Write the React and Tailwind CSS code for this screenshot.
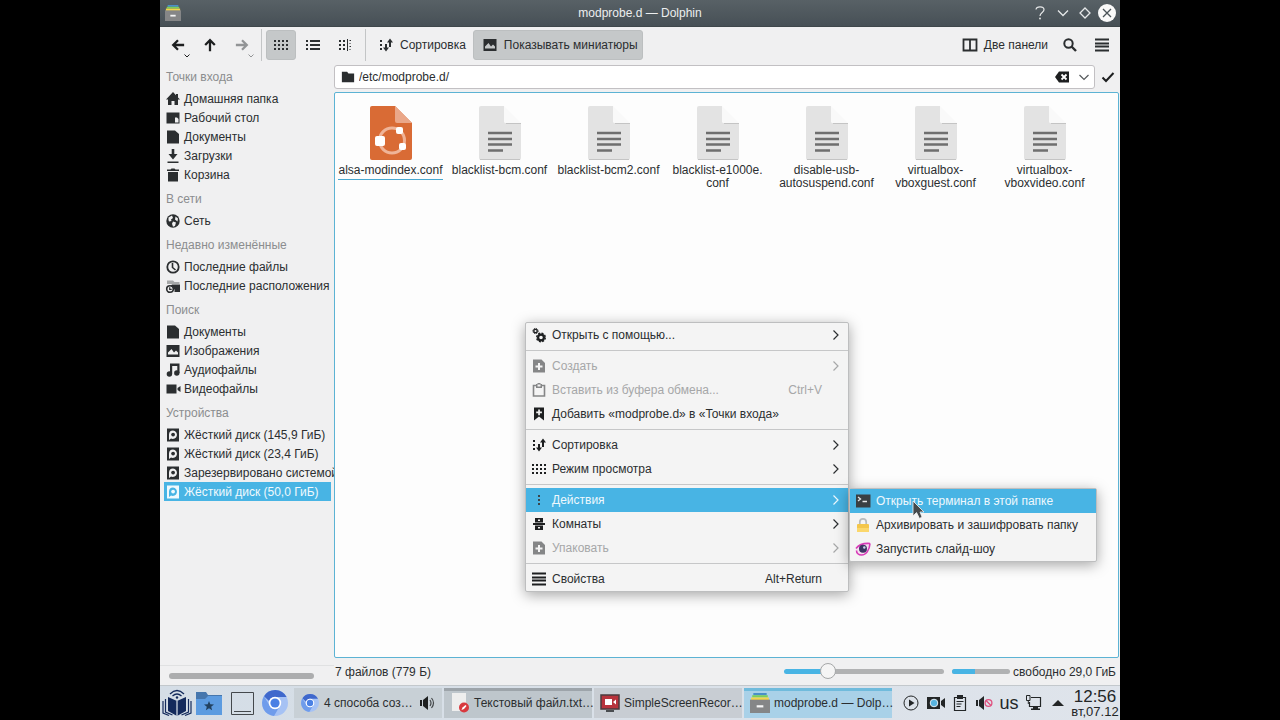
import React from "react";

const ICONS = {
  back: <path d="M15 8H3M8 2.5 2.5 8 8 13.5" fill="none" stroke="currentColor" strokeWidth="2.6" />,
  up: <path d="M8 15V3M2.5 8 8 2.5 13.5 8" fill="none" stroke="currentColor" strokeWidth="2.6" />,
  forward: <path d="M1 8h12M8 2.5 13.5 8 8 13.5" fill="none" stroke="currentColor" strokeWidth="2.6" />,
  grid: <path d="M1 4h14M1 8h14M1 12h14" fill="none" stroke="currentColor" strokeWidth="2" strokeDasharray="2 2" />,
  list: (
    <>
      <path d="M1 4h2M1 8h2M1 12h2" stroke="currentColor" strokeWidth="2" />
      <path d="M5 4h10M5 8h10M5 12h10" stroke="currentColor" strokeWidth="2" />
    </>
  ),
  columns: (
    <>
      <path d="M2 4h7M2 8h7M2 12h7" stroke="currentColor" strokeWidth="2" strokeDasharray="2 2" />
      <path d="M10.5 2v12" stroke="currentColor" strokeWidth="1" />
      <path d="M12.500 3.500h1.500M12.500 6.500h1M12.500 9.500h1.500M12.500 12.500h1" stroke="currentColor" strokeWidth="1" />
    </>
  ),
  sort: (
    <>
      <path d="M3 3v11" stroke="currentColor" strokeWidth="2" strokeDasharray="2 2" />
      <path d="M8 7v6M12 4v6" stroke="currentColor" strokeWidth="2" />
      <path d="M5 10.5h6l-3 4zM9 5.500h6l-3-4z" fill="currentColor" />
    </>
  ),
  image: <path fillRule="evenodd" d="M1.500 2h13v12h-13zM3 11.500h10V9.500l-2-2-2 2L6.500 6 3 9.500z" fill="currentColor" />,
  split: <path d="M1.5 2.5h13v11h-13zM8 2.5v11" fill="none" stroke="currentColor" strokeWidth="1.8" />,
  search: (
    <>
      <circle cx="6.5" cy="6.5" r="4.2" fill="none" stroke="currentColor" strokeWidth="2" />
      <path d="m9.5 9.5 4.5 4.5" stroke="currentColor" strokeWidth="2.4" />
    </>
  ),
  menu: <path d="M1 2.500h14M1 6.500h14M1 9.500h14M1 13.500h14" stroke="currentColor" strokeWidth="1.8" />,
  folder: <path d="M1 2h6l1.500 2H15v10H1z" fill="currentColor" />,
  home: <path d="M8 1 1 8.500h2V14h3.500v-4h3v4H13V8.500h2L13 6.500V3h-2v1.200z" fill="currentColor" />,
  desktop: (
    <>
      <path d="M1.500 2.500h13v11h-13z" fill="currentColor" />
      <path d="M10 7.500h2L13.500 9v3.500H10z" fill="#f0f0f1" />
    </>
  ),
  doc: <path d="M2 1.500h8L14 5v9.500H2z" fill="currentColor" />,
  download: <path d="M6.700 1h2.600v5h3.200L8 11.500 3.500 6h3.200zM2.500 13.500h11V15h-11z" fill="currentColor" />,
  trash: <path d="M2 2.500h3.500l1-1h3l1 1H14V4H2zM3 5h10v9.500H3z" fill="currentColor" />,
  globe: (
    <>
      <circle cx="8" cy="8" r="6.700" fill="currentColor" />
      <path d="M3.500 4.500 7 2.500 8 5 6 6.500 6.500 8 4 8.500 3.500 7zM8 8.500l3 1-1 3.500-2 .8-1-3zM10.500 3.500l2.500 2-.5 3-2.500-2z" fill="#f0f0f1" />
    </>
  ),
  clock: (
    <>
      <circle cx="8" cy="8" r="5.700" fill="none" stroke="currentColor" strokeWidth="1.800" />
      <path d="M7.500 4v4.500l3 2.500" fill="none" stroke="currentColor" strokeWidth="1.600" />
    </>
  ),
  recentFolder: (
    <>
      <path d="M2 2.500h6L9.500 4H14.500v2H2z" fill="#a6a8a9" />
      <path d="M7 6.500h8v7.500H9.500A5 5 0 0 0 5.500 8z" fill="currentColor" />
      <circle cx="5" cy="11" r="3.300" fill="none" stroke="currentColor" strokeWidth="1.600" />
      <path d="M4.700 9.200v2.100h2" fill="none" stroke="currentColor" strokeWidth="1.200" />
    </>
  ),
  music: (
    <>
      <path d="M5 1.500h9.500V4H7.200v8H5zM12.300 3h2.200v8h-2.200z" fill="currentColor" />
      <circle cx="4.400" cy="12" r="2.700" fill="currentColor" />
      <circle cx="11.800" cy="11" r="2.700" fill="currentColor" />
    </>
  ),
  video: <path d="M1.500 3.500h10v9h-10zM15.500 5v6L12.500 9V7z" fill="currentColor" />,
  disk: (
    <>
      <path d="M2 1.500h12v13H2z" fill="currentColor" />
      <path d="M8 3.500a4.200 4.200 0 1 1-2 8L4 13V7.500a4.200 4.200 0 0 1 4-4z" fill="var(--hole, #f0f0f1)" />
      <circle cx="8.100" cy="7.600" r="1.900" fill="currentColor" />
    </>
  ),
  gears: (
    <>
      <circle cx="4.500" cy="4" r="1.700" fill="none" stroke="currentColor" strokeWidth="1.300" />
      <circle cx="4.500" cy="4" r="2.600" fill="none" stroke="currentColor" strokeWidth="1" strokeDasharray="1.300 .742" />
      <circle cx="10" cy="10.500" r="2.900" fill="none" stroke="currentColor" strokeWidth="2.200" />
      <circle cx="10" cy="10.500" r="4.300" fill="none" stroke="currentColor" strokeWidth="1.400" strokeDasharray="2 1.377" />
    </>
  ),
  docPlus: (
    <path fillRule="evenodd" d="M2 1.500h8.500L14 5v9.500H2zM7 5v2.500H4.500v2H7V12h2V9.500h2.500v-2H9V5z" fill="currentColor" />
  ),
  clipboard: (
    <>
      <path d="M2.500 3.500h11v10.500h-11z" fill="none" stroke="currentColor" strokeWidth="1.600" />
      <path d="M5 2h1.500V1h3v1H11v4H5z" fill="currentColor" />
      <path d="M6.500 2.500h3v2h-3z" fill="#f4f4f4" />
    </>
  ),
  bookmark: (
    <path fillRule="evenodd" d="M3 1.500h10v13L8 10.500l-5 4zM7.200 3.500v2h-2v1.700h2v2h1.700v-2h2V5.500h-2v-2z" fill="currentColor" />
  ),
  dots: <path d="M7 3h2v2H7zM7 7h2v2H7zM7 11h2v2H7z" fill="currentColor" />,
  rooms: (
    <path fillRule="evenodd" d="M4 2h8v4.500H4zM7 3.500V5h2V3.500zM2 7h12v2H2zM4 9.500h8V14H4zM7 11v1.500h2V11z" fill="currentColor" />
  ),
  terminal: (
    <>
      <path d="M1 1.500h14.500v13H1z" fill="#3a3f42" />
      <path d="m3 4 2.500 2L3 8M7.500 8.500H12" fill="none" stroke="#e8e8e8" strokeWidth="1.300" />
    </>
  ),
  lock: (
    <>
      <path d="M4.800 8V5a3.200 3.200 0 0 1 6.400 0v3" fill="none" stroke="#b9bcbd" strokeWidth="1.700" />
      <rect x="2" y="7" width="12" height="8" rx="1" fill="#f4c64a" />
      <path d="M2 11h12v4H2z" fill="#fbd76b" />
    </>
  ),
  eye: (
    <>
      <path d="M1 9C3 4 8 2 15 2.500c-.5 6-4 11.500-8.500 11.500C3 14 1 12 1 9z" fill="#f6def0" />
      <path d="M1 7.500C4 3.500 8 2 15 2.500M15 2.500c-.5 7-4 11.500-8.500 11.500C3.500 14 1.500 12 1.500 9.500" fill="none" stroke="#d83ab8" strokeWidth="1.600" />
      <circle cx="8" cy="7.800" r="4" fill="#3d3563" />
      <circle cx="9.300" cy="6.500" r="1.200" fill="#c7d6e8" />
    </>
  ),
};

function Icon({ name, className = "size-4" }) {
  return (
    <svg viewBox="0 0 16 16" className={`shrink-0 ${className}`} aria-hidden="true">
      {ICONS[name]}
    </svg>
  );
}

function Chevron({ className = "" }) {
  return (
    <svg viewBox="0 0 8 12" className={`w-2 h-3 shrink-0 ${className}`} aria-hidden="true">
      <path d="M1.500 1.500 6 6l-4.500 4.500" fill="none" stroke="currentColor" strokeWidth="1.200" />
    </svg>
  );
}

function Cabinet({ className }) {
  return (
    <svg viewBox="0 0 18 18" className={`shrink-0 ${className}`} aria-hidden="true">
      <path d="M3 0h12v2H3z" fill="#4a90c8" />
      <path d="M2 2h14v2H2z" fill="#7ccf5a" />
      <path d="M1 4h16v3H1z" fill="#f3d54e" />
      <path d="M0 6h18v12H0z" fill="#858687" />
      <path d="M6 11h6v2H6z" fill="#f5f5f5" />
    </svg>
  );
}

function Chromium({ className }) {
  return (
    <svg viewBox="0 0 26 26" className={`shrink-0 ${className}`} aria-hidden="true">
      <circle cx="13" cy="13" r="13" fill="#a6c2f4" />
      <path d="M2 6.200A13 13 0 0 1 24.600 7H13a6 6 0 0 0-5.700 4.200z" fill="#3f68cc" />
      <path d="M2 6.200A13 13 0 0 0 12 26l5-8.500a6 6 0 0 1-9.500-2z" fill="#6f9ceb" />
      <circle cx="13" cy="13" r="6.200" fill="#fff" />
      <circle cx="13" cy="13" r="4.600" fill="#4a80e4" />
    </svg>
  );
}

function FileIcon({ special }) {
  return (
    <svg viewBox="0 0 42 54" className="w-[42px] h-[54px]" aria-hidden="true">
      {special ? (
        <>
          <path d="M2 0h23l17 17v35a2 2 0 0 1-2 2H2a2 2 0 0 1-2-2V2a2 2 0 0 1 2-2z" fill="#d96b35" />
          <path d="M25 0v15a2 2 0 0 0 2 2h15z" fill="#eaa789" />
          <circle cx="22" cy="34.500" r="12.500" fill="none" stroke="#efb498" strokeWidth="3" />
          <g fill="#fff">
            <rect x="5" y="30" width="10" height="10" rx="2" />
            <rect x="26" y="21" width="7" height="7" rx="2" />
            <rect x="29" y="37" width="7" height="7" rx="2" />
          </g>
        </>
      ) : (
        <>
          <path d="M2 0h23v15a2 2 0 0 0 2 2h15v35a2 2 0 0 1-2 2H2a2 2 0 0 1-2-2V2a2 2 0 0 1 2-2z" fill="#e3e3e3" />
          <path d="M25 0v15a2 2 0 0 0 2 2h15z" fill="#f9f9f9" />
          <path d="M27 17.500h15M1 53.500h40" stroke="#c4c4c4" />
          <path d="M9 27h24M9 33h24M9 38.500h24M9 44.500h15" stroke="#6f6f6f" strokeWidth="2.600" />
        </>
      )}
    </svg>
  );
}

const PLACES = [
  { title: "Точки входа", items: [["home", "Домашняя папка"], ["desktop", "Рабочий стол"], ["doc", "Документы"], ["download", "Загрузки"], ["trash", "Корзина"]] },
  { title: "В сети", items: [["globe", "Сеть"]] },
  { title: "Недавно изменённые", items: [["clock", "Последние файлы"], ["recentFolder", "Последние расположения"]] },
  { title: "Поиск", items: [["doc", "Документы"], ["image", "Изображения"], ["music", "Аудиофайлы"], ["video", "Видеофайлы"]] },
  { title: "Устройства", items: [["disk", "Жёсткий диск (145,9 ГиБ)"], ["disk", "Жёсткий диск (23,4 ГиБ)"], ["disk", "Зарезервировано системой"], ["disk", "Жёсткий диск (50,0 ГиБ)", true]] },
];

const FILES = [
  ["alsa-modindex.conf"],
  ["blacklist-bcm.conf"],
  ["blacklist-bcm2.conf"],
  ["blacklist-e1000e.", "conf"],
  ["disable-usb-", "autosuspend.conf"],
  ["virtualbox-", "vboxguest.conf"],
  ["virtualbox-", "vboxvideo.conf"],
];

const MENU = [
  { icon: "gears", label: "Открыть с помощью...", sub: true },
  null,
  { icon: "docPlus", label: "Создать", sub: true, disabled: true },
  { icon: "clipboard", label: "Вставить из буфера обмена...", keys: "Ctrl+V", disabled: true },
  { icon: "bookmark", label: "Добавить «modprobe.d» в «Точки входа»" },
  null,
  { icon: "sort", label: "Сортировка", sub: true },
  { icon: "grid", label: "Режим просмотра", sub: true },
  null,
  { icon: "dots", label: "Действия", sub: true, active: true },
  { icon: "rooms", label: "Комнаты", sub: true },
  { icon: "docPlus", label: "Упаковать", sub: true, disabled: true },
  null,
  { icon: "menu", label: "Свойства", keys: "Alt+Return" },
];

const ACTIONS = [
  { icon: "terminal", label: "Открыть терминал в этой папке", active: true },
  { icon: "lock", label: "Архивировать и зашифровать папку" },
  { icon: "eye", label: "Запустить слайд-шоу" },
];

function MenuRow({ item }) {
  if (!item) return <div className="h-[7px] flex items-center"><div className="h-px w-full bg-[#c6c7c8]" /></div>;
  const tone = item.active ? "bg-[#48b4e4] text-[#eef8fd]" : item.disabled ? "text-[#a6a7a8]" : "text-[#2b2e30]";
  return (
    <button type="button" role="menuitem" disabled={item.disabled} className={`flex h-6 w-full items-center pl-[5px] pr-2 text-left ${tone}`}>
      <span className={`mr-[5px] ${item.active ? "text-[#3b464c]" : item.disabled ? "text-[#858687]" : "text-[#1d1f20]"}`}>
        <Icon name={item.icon} />
      </span>
      <span className="flex-1 whitespace-nowrap">{item.label}</span>
      {item.keys && <span className="mr-[18px]">{item.keys}</span>}
      {item.sub && <Chevron />}
    </button>
  );
}

function TitleBar() {
  return (
    <header className="relative flex h-[27px] shrink-0 items-center justify-center border-b border-[#3f474b] bg-linear-to-b from-[#586166] to-[#475056] text-[#eceeef]">
      <Cabinet className="absolute left-[5px] size-4" />
      <h1>modprobe.d — Dolphin</h1>
      <div className="absolute right-1 flex items-center gap-1 text-[#e6e8e9]">
        <button type="button" aria-label="Справка" className="flex w-5 justify-center">
          <svg viewBox="0 0 10 14" className="h-3.5 w-2.5"><path d="M1 3.500C1.500 0 9 0 9 3.800 9 6.500 5 6.500 5 10" fill="none" stroke="currentColor" strokeWidth="1.200" /><circle cx="5" cy="12.500" r=".9" fill="currentColor" /></svg>
        </button>
        <button type="button" aria-label="Свернуть" className="flex w-[18px] justify-center">
          <svg viewBox="0 0 12 8" className="h-2 w-3"><path d="m1 1.500 5 5 5-5" fill="none" stroke="currentColor" strokeWidth="1.300" /></svg>
        </button>
        <button type="button" aria-label="Развернуть" className="flex w-[18px] justify-center">
          <svg viewBox="0 0 12 12" className="size-3"><path d="m6 1 5 5-5 5-5-5z" fill="none" stroke="currentColor" strokeWidth="1.300" /></svg>
        </button>
        <button type="button" aria-label="Закрыть" className="flex size-[18px] items-center justify-center rounded-full bg-[#fafafa] text-[#4a5358]">
          <svg viewBox="0 0 10 10" className="size-2.5"><path d="m1 1 8 8M9 1 1 9" stroke="currentColor" strokeWidth="1.300" /></svg>
        </button>
      </div>
    </header>
  );
}

function Toolbar() {
  return (
    <div className="flex h-9 shrink-0 items-center whitespace-nowrap pl-0.5 pr-0.5">
      {["back", "up", "forward"].map((name) => (
        <button key={name} type="button" aria-label={name} className={`relative flex h-[30px] w-8 items-center justify-center ${name === "forward" ? "text-[#929496]" : "text-[#1d1f20]"}`}>
          <Icon name={name} className="size-3.5" />
          {name !== "up" && (
            <svg viewBox="0 0 6 4" className="absolute bottom-0.5 right-1 h-1 w-1.5"><path d="m.5.5 2.500 2.500L5.500.5" fill="none" stroke="currentColor" /></svg>
          )}
        </button>
      ))}
      <div className="ml-[3px] mr-1 h-8 w-px bg-[#c3c5c6]" />
      <button type="button" aria-label="Значки" aria-pressed="true" className="flex h-[30px] w-[30px] items-center justify-center rounded-[3px] border border-[#bcbfc0] bg-[#c5c8c9]">
        <Icon name="grid" />
      </button>
      <button type="button" aria-label="Список" className="ml-px flex h-[30px] w-8 items-center justify-center"><Icon name="list" /></button>
      <button type="button" aria-label="Столбцы" className="flex h-[30px] w-8 items-center justify-center"><Icon name="columns" /></button>
      <div className="mx-1 h-8 w-px bg-[#c3c5c6]" />
      <button type="button" className="flex h-[30px] items-center gap-1.5 pl-2 pr-1.5"><Icon name="sort" />Сортировка</button>
      <button type="button" aria-pressed="true" className="ml-px flex h-[30px] items-center gap-1.5 rounded-[3px] border border-[#bcbfc0] bg-[#c5c8c9] pl-2 pr-1"><Icon name="image" />Показывать миниатюры</button>
      <div className="flex-1" />
      <button type="button" className="flex h-[30px] items-center gap-1.5 px-1.5"><Icon name="split" />Две панели</button>
      <button type="button" aria-label="Поиск" className="flex h-[30px] w-8 items-center justify-center"><Icon name="search" /></button>
      <button type="button" aria-label="Меню" className="flex h-[30px] w-8 items-center justify-center"><Icon name="menu" /></button>
    </div>
  );
}

function Sidebar() {
  return (
    <aside className="flex w-[174px] shrink-0 flex-col">
      <nav className="min-h-0 flex-1 overflow-hidden border-b border-[#e0e1e2] pl-1">
        {PLACES.map((group, i) => (
          <section key={group.title}>
            <h2 className={`flex h-[27px] items-end pl-0.5 pb-1 text-[#8b8d8f] ${i === 0 ? "-mt-px" : ""}`}>{group.title}</h2>
            {group.items.map(([icon, label, selected]) => (
              <a key={label} href="#" className={`mr-[3px] flex h-[19px] items-center gap-[3px] whitespace-nowrap pl-px ${selected ? "bg-[#48b4e4] text-[#f0f9fd] [--hole:#48b4e4]" : ""}`}>
                <Icon name={icon} />
                {label}
              </a>
            ))}
          </section>
        ))}
      </nav>
      <div className="flex h-[19px] shrink-0 items-center pl-[9px] pr-5">
        <div className="h-1.5 w-full rounded-full bg-[#acadae]" />
      </div>
    </aside>
  );
}

function LocationBar() {
  return (
    <div className="flex h-6 shrink-0 items-center">
      <div className="flex h-full flex-1 items-center rounded-[3px] border border-[#c2c0c3] bg-white pl-1.5 pr-1">
        <Icon name="folder" className="size-3.5" />
        <input type="text" aria-label="Адрес" defaultValue="/etc/modprobe.d/" className="ml-1 min-w-0 flex-1 bg-transparent outline-none" />
        <button type="button" aria-label="Очистить">
          <svg viewBox="0 0 16 12" className="h-3 w-4">
            <path d="M5 .5h10v11H5L1 6z" fill="#1d1f20" />
            <path d="m7.500 3.500 5 5M12.500 3.500l-5 5" stroke="#fff" strokeWidth="1.800" />
          </svg>
        </button>
        <button type="button" aria-label="Показать список" className="ml-2">
          <svg viewBox="0 0 12 8" className="h-2 w-3"><path d="m1.500 2 4.500 4.500L10.500 2" fill="none" stroke="#55595b" strokeWidth="1.200" /></svg>
        </button>
      </div>
      <button type="button" aria-label="Перейти" className="flex w-[25px] justify-center">
        <svg viewBox="0 0 14 12" className="h-3 w-3.5"><path d="m1.500 6.500 3.500 3.500 7.500-8" fill="none" stroke="#1d1f20" strokeWidth="2" /></svg>
      </button>
    </div>
  );
}

function ContextMenu() {
  return (
    <>
      <div role="menu" className="absolute left-[190px] top-[229px] w-[324px] rounded-[2px] border border-[#bdbebf] bg-[#f4f4f4] shadow-[0_3px_14px_rgba(0,0,0,0.35)]">
        {MENU.map((item, i) => <MenuRow key={i} item={item} />)}
      </div>
      <div role="menu" className="absolute left-[514px] top-[395px] w-[248px] rounded-[2px] border border-[#bdbebf] bg-[#f4f4f4] shadow-[0_3px_14px_rgba(0,0,0,0.35)]">
        {ACTIONS.map((item) => <MenuRow key={item.label} item={item} />)}
      </div>
      <svg viewBox="0 0 12 20" className="absolute left-[577px] top-[407px] h-5 w-3" aria-hidden="true">
        <path d="M1 1v15l3.500-3.500L7.500 18.500l2.500-1.500-2-5h4z" fill="#45494b" stroke="#f4f4f4" strokeWidth=".8" />
      </svg>
    </>
  );
}

function FileView() {
  return (
    <main className="relative mt-[3px] min-h-0 flex-1 rounded-[2px] border border-[#5cb3d4] bg-[#fdfdfd] pl-px pt-[13px]">
      <ul className="grid grid-cols-[repeat(auto-fill,109px)]">
        {FILES.map((lines, i) => (
          <li key={i} className="flex flex-col items-center">
            <FileIcon special={i === 0} />
            <p className={`mt-1 text-center leading-[13px] ${i === 0 ? "border-b border-[#48a8d0] pb-0.5" : ""}`}>
              {lines.map((line) => <span key={line} className="block whitespace-nowrap">{line}</span>)}
            </p>
          </li>
        ))}
      </ul>
      <ContextMenu />
    </main>
  );
}

function StatusBar() {
  return (
    <footer className="flex h-[27px] shrink-0 items-center pl-px pr-[3px]">
      <span className="flex-1">7 файлов (779 Б)</span>
      <input
        type="range"
        aria-label="Размер значков"
        min="0"
        max="100"
        defaultValue="25"
        className="h-4 w-40 appearance-none bg-transparent [&::-webkit-slider-runnable-track]:h-[5px] [&::-webkit-slider-runnable-track]:rounded-full [&::-webkit-slider-runnable-track]:bg-[linear-gradient(to_right,#48b4e4_27%,#b1b2b3_27%)] [&::-webkit-slider-thumb]:-mt-[6px] [&::-webkit-slider-thumb]:size-4 [&::-webkit-slider-thumb]:appearance-none [&::-webkit-slider-thumb]:rounded-full [&::-webkit-slider-thumb]:border [&::-webkit-slider-thumb]:border-[#a5a7a8] [&::-webkit-slider-thumb]:bg-[#f5f5f5]"
      />
      <div role="meter" aria-label="Занято на диске" aria-valuenow={40} aria-valuemin={0} aria-valuemax={100} className="ml-2 mr-[3px] h-[5px] w-[58px] overflow-hidden rounded-full bg-[#b1b2b3]">
        <div className="h-full bg-[#48b4e4]" style={{ width: "40%" }} />
      </div>
      <span>свободно 29,0 ГиБ</span>
    </footer>
  );
}

function Task({ icon, label, tone, children }) {
  return (
    <button type="button" className={`flex h-[30px] w-[148px] items-center border-t-[3px] pb-[3px] pl-1.5 ${tone}`}>
      {icon}
      <span className="ml-1 flex-1 whitespace-nowrap text-left">{label}</span>
      {children}
    </button>
  );
}

function Speaker() {
  return (
    <svg viewBox="0 0 16 16" className="mr-1.5 size-4 shrink-0" aria-hidden="true">
      <path d="M0 5h2v6H0zM3 5l5-4v14l-5-4z" fill="#1d1f20" />
      <path d="M10 5q2 3 0 6M11.500 3q4 5 0 10" fill="none" stroke="#44484a" strokeWidth="1.200" />
    </svg>
  );
}

function Launchers() {
  return (
    <div className="flex w-[134px] items-center pl-0.5">
      <button type="button" aria-label="Меню приложений" className="w-[34px]">
        <svg viewBox="0 0 30 28" className="h-7 w-[30px]">
          <path d="M15 12 6 8v14l9 5 9-5V8z" fill="#142a5c" />
          <path d="M15 12v15" stroke="#dde5ec" strokeWidth="1.200" />
          <path d="M3.500 10v13l7 3M26.500 10v13l-7 3M1 12v12l6 2.500M29 12v12l-6 2.500" fill="none" stroke="#142a5c" strokeWidth="1.200" />
          <path d="M8 5q7-7 14 0M10.500 7q4.500-4 9 0" fill="none" stroke="#142a5c" strokeWidth="1.300" />
          <circle cx="15" cy="8.500" r="1.200" fill="#142a5c" />
        </svg>
      </button>
      <button type="button" aria-label="Папка" className="w-[35px]">
        <svg viewBox="0 0 26 24" className="h-6 w-[26px]">
          <path d="M0 1h10l2 3h14v19H0z" fill="#4576ad" />
          <path d="M0 8h9l3-3h14v19H0z" fill="#5c9be0" />
          <path d="m13 10 1.300 3.200 3.700.2-2.800 2.300.9 3.500-3.100-1.900-3.100 1.900.9-3.500L8 13.400l3.700-.2z" fill="#22415f" />
        </svg>
      </button>
      <button type="button" aria-label="Показать рабочий стол" className="w-[31px]">
        <svg viewBox="0 0 23 23" className="size-[23px]">
          <path d="M.5.5h22v22H.500zM3 19.500h17" fill="none" stroke="#44484c" />
        </svg>
      </button>
      <button type="button" aria-label="Chromium"><Chromium className="size-[26px]" /></button>
    </div>
  );
}

function Tray() {
  return (
    <div className="flex flex-1 items-center justify-end">
      <div className="flex items-center text-[#232627]">
        <button type="button" aria-label="Проигрыватель" className="flex w-[25px] justify-center">
          <svg viewBox="0 0 16 16" className="size-4"><circle cx="8" cy="8" r="7" fill="none" stroke="currentColor" /><path d="M6 4.500 11.500 8 6 11.500z" fill="currentColor" /></svg>
        </button>
        <button type="button" aria-label="Запись" className="flex w-[25px] justify-center">
          <svg viewBox="0 0 18 14" className="h-3.5 w-[18px]"><path d="M0 1h13v12H0zM18 2v10l-4-3V5z" fill="currentColor" /><circle cx="7" cy="7" r="3.800" fill="#58b4e0" stroke="#e4eef4" /></svg>
        </button>
        <button type="button" aria-label="Буфер обмена" className="flex w-6 justify-center">
          <svg viewBox="0 0 14 16" className="h-4 w-3.5"><path d="M1.500 2.500h11v13h-11zM3.500 6.500h7M3.500 9h5M3.500 11.500h4" fill="none" stroke="currentColor" strokeWidth="1.200" /><path d="M4 0h6v4H4z" fill="currentColor" /></svg>
        </button>
        <button type="button" aria-label="Звук выключен" className="flex w-[25px] justify-center">
          <svg viewBox="0 0 17 16" className="h-4 w-[17px]"><path d="M0 5h2v6H0zM3 5l5-4v14l-5-4z" fill="currentColor" /><circle cx="12.500" cy="8" r="3.400" fill="none" stroke="#e0507e" strokeWidth="1.300" /><path d="m10 5.500 5 5" stroke="#e0507e" strokeWidth="1.300" /></svg>
        </button>
        <button type="button" className="w-6 text-center text-lg leading-6">us</button>
        <button type="button" aria-label="Сеть" className="flex w-[25px] justify-center">
          <svg viewBox="0 0 16 16" className="size-4"><path d="M5 2.500h9.500v9H3.500V7" fill="none" stroke="currentColor" strokeWidth="1.200" /><path d="M.5.500h3.500v5H.500zM2.300 5v4" fill="none" stroke="currentColor" /><path d="M7 12h5v1.500h2V15H5v-1.500h2z" fill="currentColor" /></svg>
        </button>
        <button type="button" aria-label="Показать скрытые значки" className="flex w-6 justify-center">
          <svg viewBox="0 0 12 6" className="h-1.5 w-3"><path d="M6 0l6 6H0z" fill="currentColor" /></svg>
        </button>
      </div>
      <time className="flex w-[50px] flex-col items-center text-[#232627]">
        <span className="text-[17px] leading-[17px]">12:56</span>
        <span className="text-[13px] leading-[14px]">вт,07.12</span>
      </time>
    </div>
  );
}

function Taskbar() {
  return (
    <div className="flex h-[35px] shrink-0 items-center border-t border-[#c3c8cc] bg-linear-to-r from-[#d4dde6] to-[#dfe4eb]">
      <Launchers />
      <div className="flex gap-0.5">
        <Task icon={<Chromium className="mx-px size-[18px]" />} label="4 способа соз…" tone="border-[#c8d0d6] bg-[#c8d0d6]">
          <Speaker />
        </Task>
        <Task
          icon={
            <svg viewBox="0 0 20 20" className="size-5 shrink-0">
              <path d="M2 0h14v18H2z" fill="#eeeeee" />
              <circle cx="14" cy="14.500" r="5" fill="#d8393f" />
              <path d="m11.500 17 1-2.500 3-2.500 1 1-2.500 3z" fill="#fff" />
            </svg>
          }
          label="Текстовый файл.txt…"
          tone="border-[#9da4aa] bg-[#bec6cc]"
        />
        <Task
          icon={
            <svg viewBox="0 0 20 20" className="size-5 shrink-0">
              <path d="M1 2h18v14H1z" fill="#b8333c" stroke="#4b3a3d" strokeWidth="1.500" />
              <path d="M5 6h7v6H5zM13 9l3-2.500v5z" fill="#fff" />
              <path d="M6 17h8v2H6z" fill="#4a4d50" />
            </svg>
          }
          label="SimpleScreenRecor…"
          tone="border-[#c8cdd3] bg-[#c8cdd3]"
        />
        <Task icon={<Cabinet className="size-5" />} label="modprobe.d — Dolp…" tone="border-[#70bbdc] bg-[#a9d1e8]" />
      </div>
      <Tray />
    </div>
  );
}

export default function App() {
  return (
    <div className="flex h-screen justify-center overflow-hidden bg-black font-['Liberation_Sans',Arial,sans-serif] text-xs text-[#2b2e30]">
      <div className="flex h-full w-3/4 flex-col bg-[#f0f0f1]">
        <TitleBar />
        <Toolbar />
        <div className="flex min-h-0 flex-1">
          <Sidebar />
          <div className="flex min-w-0 flex-1 flex-col pt-0.5">
            <LocationBar />
            <div className="flex min-h-0 flex-1 flex-col pr-px">
              <FileView />
              <StatusBar />
            </div>
          </div>
        </div>
        <Taskbar />
      </div>
    </div>
  );
}
